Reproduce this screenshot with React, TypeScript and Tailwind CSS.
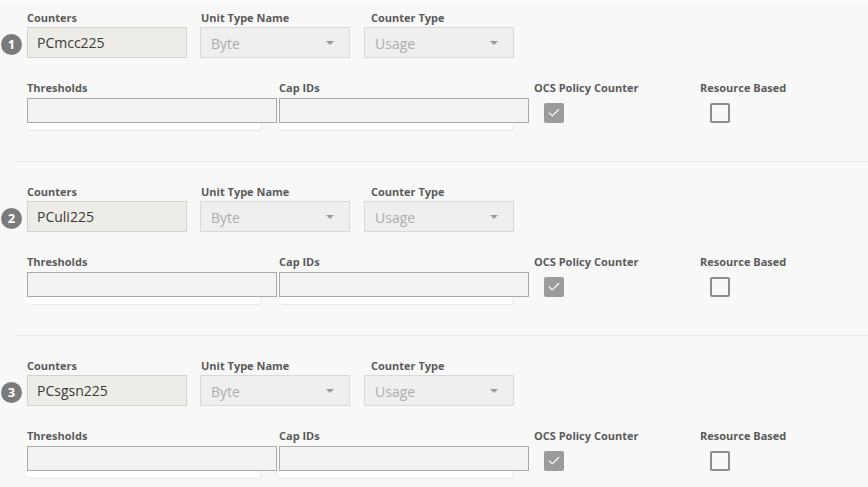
import { Check } from "lucide-react";

type Row = { n: number; counter: string };

const rows: Row[] = [
  { n: 1, counter: "PCmcc225" },
  { n: 2, counter: "PCuli225" },
  { n: 3, counter: "PCsgsn225" },
];

function Label({ children, className = "" }: { children: string; className?: string }) {
  return <div className={`h-[14px] text-[11px] leading-[14px] font-bold text-[#5a5a5a] whitespace-nowrap ${className}`}>{children}</div>;
}

function Select({ value }: { value: string }) {
  return (
    <div className="mt-[2px] h-[31px] w-[150px] bg-[#efefef] border border-[#d9d9d9] flex items-center justify-between pl-[10px] pr-[15px]">
      <span className="text-[14px] text-[#adadad] pt-[1px]">{value}</span>
      <span className="w-0 h-0 border-l-[4px] border-r-[4px] border-t-[4px] border-l-transparent border-r-transparent border-t-[#9a9a9a]"></span>
    </div>
  );
}

function TextBox() {
  return (
    <div className="mt-[3px] h-[33px] w-[235px] bg-white rounded-b-[4px] border-b border-r border-[#e8e8e8]">
      <div className="h-[25px] w-[250px] bg-[#f3f3f3] border border-[#a9a9a9]"></div>
    </div>
  );
}

function CounterBlock({ row, first }: { row: Row; first: boolean }) {
  return (
    <div className={`${first ? "pt-[10px]" : "pt-[23px]"} pb-[30px]`}>
      {/* top line */}
      <div className="flex items-end pl-[1px]">
        <div className="w-[21px] h-[21px] mr-[5px] mb-[3px] rounded-full bg-[#7b7b7b] flex items-center justify-center text-white text-[13px] font-bold">
          {row.n}
        </div>
        <div className="w-[160px]">
          <Label>Counters</Label>
          <div className="mt-[2px] h-[31px] bg-[#edece7] border border-[#d2d2cc] flex items-center pl-[9px]">
            <span className="text-[14px] text-[#3a3a3a]">{row.counter}</span>
          </div>
        </div>
        <div className="ml-[13px]">
          <Label className="ml-[1px]">Unit Type Name</Label>
          <Select value="Byte" />
        </div>
        <div className="ml-[14px]">
          <Label className="ml-[7px]">Counter Type</Label>
          <Select value="Usage" />
        </div>
      </div>

      {/* second line */}
      <div className="flex mt-[23px] pl-[27px]">
        <div className="w-[235px]">
          <Label>Thresholds</Label>
          <TextBox />
        </div>
        <div className="w-[235px] ml-[17px]">
          <Label>Cap IDs</Label>
          <TextBox />
        </div>
        <div className="w-[166px] ml-[20px]">
          <Label>OCS Policy Counter</Label>
          <div className="mt-[8px] ml-[10px] w-[20px] h-[20px] rounded-[2px] bg-[#9b9b9b] flex items-center justify-center">
            <Check size={14} strokeWidth={2} className="text-white" />
          </div>
        </div>
        <div>
          <Label>Resource Based</Label>
          <div className="mt-[8px] ml-[10px] w-[20px] h-[20px] rounded-[2px] bg-[#f8f8f8] border-2 border-[#8c8c8c]"></div>
        </div>
      </div>
    </div>
  );
}

export default function App() {
  return (
    <div className="w-[868px] h-[487px] overflow-hidden bg-[#f8f8f8] border-t border-white" style={{ fontFamily: '"Open Sans", "Liberation Sans", sans-serif' }}>
      {rows.map((r, i) => (
        <div key={r.n}>
          {i > 0 && <div className="ml-[16px] h-px bg-[#e6e6e6]"></div>}
          <CounterBlock row={r} first={i === 0} />
        </div>
      ))}
    </div>
  );
}
